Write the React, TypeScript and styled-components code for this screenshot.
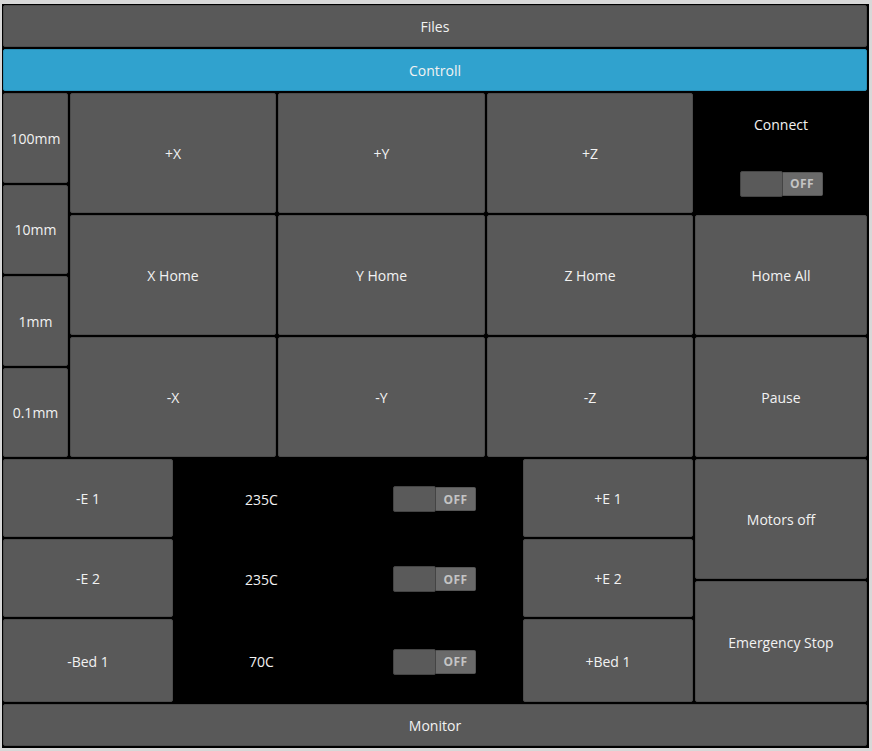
import React from 'react';
import styled, { createGlobalStyle } from 'styled-components';

const GlobalStyle = createGlobalStyle`
    body {
        margin: 0;
        background: #d8d8d8;
        font-family: "Open Sans", "DejaVu Sans", sans-serif;
    }
`;

const Window = styled.div`
    box-sizing: border-box;
    margin: 4px 0 0 2px;
    width: 867px;
    height: 744px;
    padding: 1px 2px 2px 1px;
    background: #000;
    display: flex;
    flex-direction: column;
    gap: 2px;
`;

const Button = styled.div<{ $active?: boolean }>`
    box-sizing: border-box;
    display: flex;
    align-items: center;
    justify-content: center;
    padding-top: 1px;
    background: ${({ $active }) => ($active ? '#30a2ce' : '#595959')};
    border: 1px solid ${({ $active }) => ($active ? '#2a8fb6' : '#4c4c4c')};
    border-radius: 2px;
    color: #f2f2f2;
    font-size: 14px;
    user-select: none;
`;

const BarButton = styled(Button)`
    height: 42px;
    flex: none;
`;

const StepButton = styled(Button)`
    flex: 1;
`;

const JogGrid = styled.div`
    display: grid;
    grid-template-columns: 65px 206px 207px 206px 172px;
    grid-template-rows: 120px 120px 120px;
    gap: 2px;
`;

const StepColumn = styled.div`
    grid-row: 1 / span 3;
    display: flex;
    flex-direction: column;
    gap: 2px;
`;

const ConnectCell = styled.div`
    display: grid;
    grid-template-rows: 1fr 1fr;
    align-items: center;
    justify-items: center;
    color: #f2f2f2;
    font-size: 14px;
    padding-top: 2px;
`;

const BottomRow = styled.div`
    display: flex;
    gap: 2px;
    height: 243px;
`;

const HeaterGrid = styled.div`
    display: grid;
    grid-template-columns: 170px 346px 170px;
    grid-template-rows: 78px 78px 83px;
    gap: 2px;
`;

const HeaterCell = styled.div`
    display: grid;
    grid-template-columns: 1fr 1fr;
    align-items: center;
    justify-items: center;
    padding-top: 2px;
    color: #f2f2f2;
    font-size: 14px;
`;

const SideColumn = styled.div`
    width: 172px;
    display: flex;
    flex-direction: column;
    gap: 2px;
`;

const SideButton = styled(Button)<{ $grow: number }>`
    flex: ${({ $grow }) => $grow};
`;

const Switch = styled.div`
    display: flex;
    align-items: center;
`;

const Knob = styled.div`
    box-sizing: border-box;
    width: 43px;
    height: 26px;
    background: #5a5a5a;
    border: 1px solid #444;
    border-radius: 2px;
`;

const OffLabel = styled.div`
    box-sizing: border-box;
    width: 40px;
    height: 24px;
    display: flex;
    align-items: center;
    justify-content: center;
    background: #6a6a6a;
    border: 1px solid #555;
    border-left: none;
    border-radius: 0 2px 2px 0;
    color: #c4c4c4;
    font-family: "Open Sans", sans-serif;
    font-weight: bold;
    font-size: 12px;
    letter-spacing: 0.5px;
`;

const OffSwitch = () => (
    <Switch>
        <Knob />
        <OffLabel>OFF</OffLabel>
    </Switch>
);

const heaters = [
    { minus: '-E 1', temp: '235C', plus: '+E 1' },
    { minus: '-E 2', temp: '235C', plus: '+E 2' },
    { minus: '-Bed 1', temp: '70C', plus: '+Bed 1' },
];

const App: React.FC = () => {
    return (
        <>
            <GlobalStyle />
            <Window>
                <BarButton>Files</BarButton>
                <BarButton $active>Controll</BarButton>
                <JogGrid>
                    <StepColumn>
                        {['100mm', '10mm', '1mm', '0.1mm'].map((step) => (
                            <StepButton key={step}>{step}</StepButton>
                        ))}
                    </StepColumn>
                    <Button>+X</Button>
                    <Button>+Y</Button>
                    <Button>+Z</Button>
                    <ConnectCell>
                        <span>Connect</span>
                        <OffSwitch />
                    </ConnectCell>
                    <Button>X Home</Button>
                    <Button>Y Home</Button>
                    <Button>Z Home</Button>
                    <Button>Home All</Button>
                    <Button>-X</Button>
                    <Button>-Y</Button>
                    <Button>-Z</Button>
                    <Button>Pause</Button>
                </JogGrid>
                <BottomRow>
                    <HeaterGrid>
                        {heaters.map((h) => (
                            <React.Fragment key={h.minus}>
                                <Button>{h.minus}</Button>
                                <HeaterCell>
                                    <span>{h.temp}</span>
                                    <OffSwitch />
                                </HeaterCell>
                                <Button>{h.plus}</Button>
                            </React.Fragment>
                        ))}
                    </HeaterGrid>
                    <SideColumn>
                        <SideButton $grow={120}>Motors off</SideButton>
                        <SideButton $grow={121}>Emergency Stop</SideButton>
                    </SideColumn>
                </BottomRow>
                <BarButton>Monitor</BarButton>
            </Window>
        </>
    );
};

export default App;
